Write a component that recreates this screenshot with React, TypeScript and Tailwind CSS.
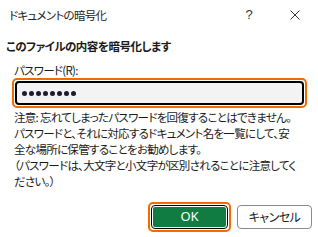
import React from "react";

const font = "font-['Noto_Sans_CJK_JP','Noto_Sans',sans-serif] [font-feature-settings:'palt']";

export default function App() {
  return (
    <div className={`w-[318px] h-[237px] bg-white flex flex-col text-[#1a1a1a] ${font}`}>
      {/* title bar */}
      <div className="h-[30px] flex items-center shrink-0">
        <div className="pl-[9px] text-[11.5px] tracking-[-0.7px] leading-[16px] text-[#222] flex-1">ドキュメントの暗号化</div>
        <div className="w-[46px] h-[30px] flex items-center justify-center text-[13px] text-[#333] font-['Liberation_Sans',sans-serif]">?</div>
        <div className="w-[46px] h-[30px] flex items-center justify-center">
          <svg width="10" height="10" viewBox="0 0 10 10">
            <path d="M0.5 0.5 L9.5 9.5 M9.5 0.5 L0.5 9.5" stroke="#333" strokeWidth="1" fill="none" />
          </svg>
        </div>
      </div>

      {/* heading */}
      <div className="mt-[8px] pl-[6px] text-[11.5px] tracking-[-0.5px] leading-[16px] font-bold whitespace-nowrap">このファイルの内容を暗号化します</div>

      {/* label */}
      <div className="mt-[8px] pl-[14px] text-[11.5px] tracking-[-0.7px] leading-[16px] whitespace-nowrap">パスワード(R):</div>

      {/* input */}
      <div className="ml-[12px] w-[295px] h-[30px] rounded-[5px] border-2 border-[#f56a00] p-[1px] shrink-0">
        <div className="w-full h-full rounded-[4px] border-2 border-black bg-[#f3f3f3] flex items-center pl-[5px] gap-[2px]">
          {Array.from({ length: 8 }).map((_, i) => (
            <div key={i} className="w-[5px] h-[5px] rounded-full bg-[#1c1c2e]" />
          ))}
        </div>
      </div>

      {/* note */}
      <div className="mt-[1px] pl-[14px] text-[11.5px] tracking-[-0.7px] leading-[16px] whitespace-nowrap">
        <div>注意: 忘れてしまったパスワードを回復することはできません。</div>
        <div>パスワードと、それに対応するドキュメント名を一覧にして、安</div>
        <div>全な場所に保管することをお勧めします。</div>
        <div>（パスワードは、大文字と小文字が区別されることに注意してく</div>
        <div>ださい。）</div>
      </div>

      {/* buttons */}
      <div className="mt-auto mb-[5px] flex items-center justify-end pr-[6px] gap-[6px]">
        <div className="w-[83px] h-[30px] rounded-[5px] border-2 border-[#f56a00] p-[1px]">
          <div className="w-full h-full rounded-[4px] border border-black bg-white p-[1px]">
            <div className="w-full h-full rounded-[2px] bg-[#107c41] flex items-center justify-center text-white text-[13px] font-['Noto_Sans',sans-serif]">
              OK
            </div>
          </div>
        </div>
        <div className="w-[75px] h-[24px] rounded-[4px] border border-[#8a8a8a] bg-white flex items-center justify-center text-[12px] tracking-[-0.5px] text-[#1a1a1a]">
          キャンセル
        </div>
      </div>
    </div>
  );
}
